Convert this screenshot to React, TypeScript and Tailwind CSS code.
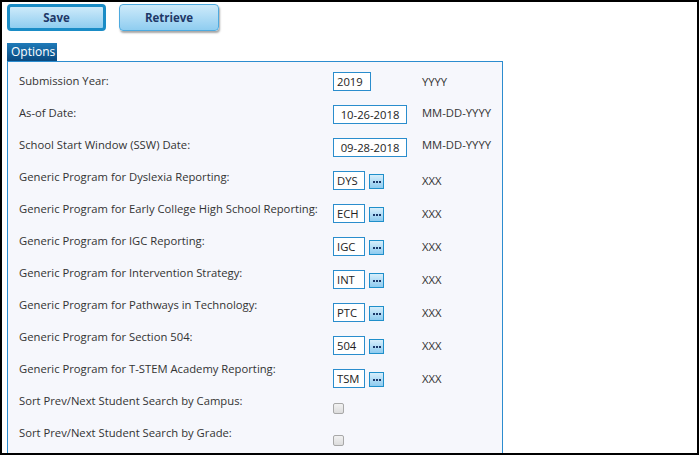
import React from "react";

type Row =
  | { kind: "text"; value: string; width: string; center?: boolean; hint: string; hintPad: string }
  | { kind: "code"; value: string; hint: string }
  | { kind: "check"; mt: string };

const labels = [
  "Submission Year:",
  "As-of Date:",
  "School Start Window (SSW) Date:",
  "Generic Program for Dyslexia Reporting:",
  "Generic Program for Early College High School Reporting:",
  "Generic Program for IGC Reporting:",
  "Generic Program for Intervention Strategy:",
  "Generic Program for Pathways in Technology:",
  "Generic Program for Section 504:",
  "Generic Program for T-STEM Academy Reporting:",
  "Sort Prev/Next Student Search by Campus:",
  "Sort Prev/Next Student Search by Grade:",
];

const rows: Row[] = [
  { kind: "text", value: "2019", width: "w-[38px]", hint: "YYYY", hintPad: "pt-[8px]" },
  { kind: "text", value: "10-26-2018", width: "w-[74px]", center: true, hint: "MM-DD-YYYY", hintPad: "pt-[6px]" },
  { kind: "text", value: "09-28-2018", width: "w-[74px]", center: true, hint: "MM-DD-YYYY", hintPad: "pt-[5px]" },
  { kind: "code", value: "DYS", hint: "XXX" },
  { kind: "code", value: "ECH", hint: "XXX" },
  { kind: "code", value: "IGC", hint: "XXX" },
  { kind: "code", value: "INT", hint: "XXX" },
  { kind: "code", value: "PTC", hint: "XXX" },
  { kind: "code", value: "504", hint: "XXX" },
  { kind: "code", value: "TSM", hint: "XXX" },
  { kind: "check", mt: "mt-[7px]" },
  { kind: "check", mt: "mt-[6px]" },
];

function EllipsisButton() {
  return (
    <button
      type="button"
      className="ml-[4px] mt-[3px] flex h-[15px] w-[15px] items-center justify-center gap-[1px] border border-[#1f8fca] bg-gradient-to-b from-[#d6eefb] to-[#8ecbef]"
    >
      <span className="h-[2px] w-[2px] bg-[#1b3768]" />
      <span className="h-[2px] w-[2px] bg-[#1b3768]" />
      <span className="h-[2px] w-[2px] bg-[#1b3768]" />
    </button>
  );
}

function ValueRow({ row }: { row: Row }) {
  if (row.kind === "check") {
    return (
      <div className="flex h-[33px] items-start">
        <span
          className={`${row.mt} block h-[11px] w-[11px] rounded-[2px] border border-[#a8a8a8] bg-gradient-to-b from-[#f2f2f2] to-[#dcdcdc]`}
        />
      </div>
    );
  }
  if (row.kind === "text") {
    return (
      <div className="flex h-[33px] items-start">
        <div className="w-[89px]">
          <input
            readOnly
            defaultValue={row.value}
            className={`${row.width} ${row.center ? "text-center" : "pl-[3px]"} mt-[6px] h-[19px] border border-[#2a8dcd] bg-white text-[11.25px] leading-[17px] text-[#222] outline-none`}
          />
        </div>
        <span className={`${row.hintPad} text-[11.25px] leading-[16px] text-[#333]`}>{row.hint}</span>
      </div>
    );
  }
  return (
    <div className="flex h-[33px] items-start">
      <div className="flex w-[89px] items-start pt-[6px]">
        <input
          readOnly
          defaultValue={row.value}
          className="h-[19px] w-[32px] border border-[#2a8dcd] bg-white pl-[3px] text-[11.25px] leading-[17px] text-[#222] outline-none"
        />
        <EllipsisButton />
      </div>
      <span className="pt-[8px] text-[11.25px] leading-[16px] text-[#333]">{row.hint}</span>
    </div>
  );
}

export default function App() {
  return (
    <div className="h-[455px] w-[699px] overflow-hidden border-2 border-black bg-white pl-[5px] pt-[2px] font-['Open_Sans','Liberation_Sans',sans-serif]">
      <div className="flex gap-[13px]">
        <button
          type="button"
          className="h-[27px] w-[99px] rounded-[4px] border-[3px] border-[#1a8cc6] bg-gradient-to-b from-[#cdeafa] to-[#8fcdf0] text-[11.5px] font-bold text-[#1e3868]"
        >
          Save
        </button>
        <button
          type="button"
          className="h-[27px] w-[100px] rounded-[4px] border border-[#4eaadf] bg-gradient-to-b from-[#cdeafa] to-[#8fcdf0] text-[11.5px] font-bold text-[#1e3868] shadow-[1px_2px_2px_rgba(0,0,0,0.35)]"
        >
          Retrieve
        </button>
      </div>

      <div className="mt-[12px]">
        <div className="flex h-[18px] w-[50px] items-center bg-gradient-to-b from-[#1f7bb9] to-[#0a4a80] pl-[4px] text-[12px] leading-[18px] text-white">
          Options
        </div>
        <div className="w-[496px] border border-[#2c8ccf] bg-[#f6f7fc] pb-[20px] pl-[11px]">
          <div className="flex">
            <div className="w-[314px] pt-[3px]">
              {labels.map((l) => (
                <div key={l} className="h-[32px] text-[11.25px] leading-[32px] whitespace-nowrap text-[#333]">
                  {l}
                </div>
              ))}
            </div>
            <div className="pt-[4px]">
              {rows.map((r, i) => (
                <ValueRow key={i} row={r} />
              ))}
            </div>
          </div>
        </div>
      </div>
    </div>
  );
}
